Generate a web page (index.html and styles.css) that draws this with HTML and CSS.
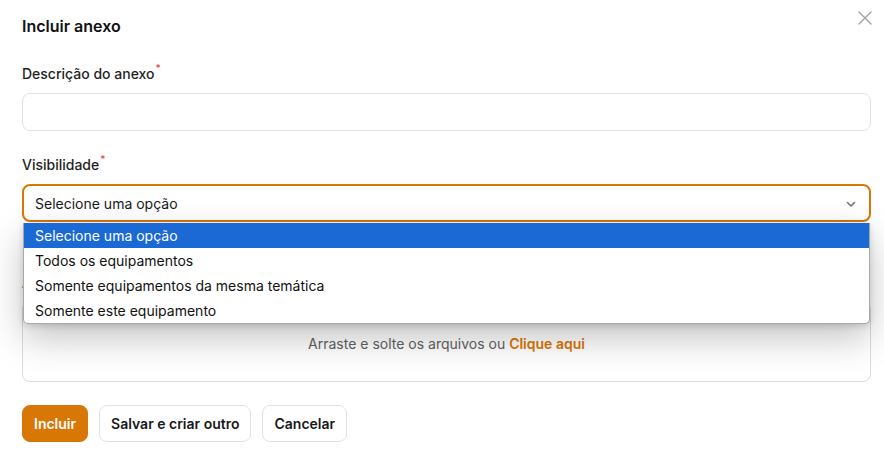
FILE: index.html
```html
<!DOCTYPE html>
<html lang="pt-BR">
<head>
<meta charset="utf-8">
<title>Incluir anexo</title>
<link rel="stylesheet" href="styles.css">
</head>
<body>
<div class="modal">
  <header class="modal-head">
    <h1 class="title">Incluir anexo</h1>
    <button class="close" aria-label="Fechar">
      <svg width="16" height="16" viewBox="0 0 16 16"><path d="M2 2L14 14M14 2L2 14" stroke="#a1a1aa" stroke-width="1.4" stroke-linecap="round" fill="none"/></svg>
    </button>
  </header>

  <div class="field">
    <label class="label">Descrição do anexo<sup class="req">*</sup></label>
    <div class="input"></div>
  </div>

  <div class="field">
    <label class="label">Visibilidade<sup class="req">*</sup></label>
    <div class="select-wrap">
      <div class="select">
        <span>Selecione uma opção</span>
        <svg class="chev" width="12" height="12" viewBox="0 0 12 12"><path d="M2.5 4.5L6 8L9.5 4.5" stroke="#6b7280" stroke-width="1.6" fill="none" stroke-linecap="round" stroke-linejoin="round"/></svg>
      </div>
      <ul class="options">
        <li class="opt active">Selecione uma opção</li>
        <li class="opt">Todos os equipamentos</li>
        <li class="opt">Somente equipamentos da mesma temática</li>
        <li class="opt">Somente este equipamento</li>
      </ul>
    </div>
  </div>

  <div class="field field-file">
    <label class="label">Anexo<sup class="req">*</sup></label>
    <div class="drop">
      <span>Arraste e solte os arquivos ou <a class="link">Clique aqui</a></span>
    </div>
  </div>

  <div class="actions">
    <button class="btn primary">Incluir</button>
    <button class="btn">Salvar e criar outro</button>
    <button class="btn">Cancelar</button>
  </div>
</div>
</body>
</html>
```

FILE: styles.css
```css
* { box-sizing: border-box; }
html, body { margin: 0; padding: 0; background: #fff; }
body {
  font-family: Inter, "Noto Sans", "Liberation Sans", sans-serif;
  color: #18181b;
  font-size: 14px;
}
.modal {
  padding: 14px 11px 0 22px;
  width: 884px;
}
.modal-head {
  display: flex;
  justify-content: space-between;
  align-items: flex-start;
  height: 24px;
}
.title {
  margin: 0;
  font-size: 16px;
  line-height: 24px;
  font-weight: 600;
  color: #111;
}
.close {
  border: 0;
  background: none;
  padding: 0;
  margin: -4px 0 0 0;
  width: 16px;
  height: 16px;
  display: flex;
}
.field { display: flex; flex-direction: column; margin-top: 26px; width: 849px; }
.field + .field { margin-top: 24px; }
.label {
  font-size: 14px;
  line-height: 20px;
  font-weight: 500;
  color: #1f1f23;
  margin-bottom: 9px;
}
.req {
  color: #ef4444;
  font-size: 10px;
  line-height: 0;
  position: relative;
  top: -1px;
  margin-left: 1px;
}
.input {
  height: 38px;
  border: 1px solid #e2e2e4;
  border-radius: 8px;
  background: #fff;
}
.select-wrap { position: relative; }
.select {
  height: 38px;
  border: 2px solid #d97706;
  border-radius: 8px;
  display: flex;
  align-items: center;
  justify-content: space-between;
  padding: 0 12px 0 11px;
  color: #18181b;
  background: #fff;
}
.chev { margin-top: 1px; }
.options {
  position: absolute;
  left: 1px;
  right: 1px;
  top: 39px;
  margin: 0;
  padding: 0;
  list-style: none;
  background: #fff;
  border: 1px solid #a8a8a8;
  border-top: 0;
  border-radius: 0 0 5px 5px;
  box-shadow: 0 14px 36px rgba(0,0,0,0.24), 0 2px 6px rgba(0,0,0,0.14);
  z-index: 5;
  overflow: hidden;
}
.opt {
  height: 25px;
  line-height: 25px;
  padding-left: 11px;
  font-size: 14px;
  color: #111;
}
.opt.active { background: #1a69d5; color: #fff; }
.field.field-file { margin-top: 51px; }
.field-file .label { margin-bottom: 8px; }
.drop {
  height: 81px;
  border: 1px solid #dcdcdc;
  border-radius: 8px;
  display: flex;
  align-items: center;
  justify-content: center;
  padding-top: 4px;
  color: #616161;
  font-size: 14px;
}
.link { color: #d97706; font-weight: 600; }
.actions {
  display: flex;
  gap: 11px;
  margin-top: 23px;
}
.btn {
  height: 37px;
  padding: 0 11px;
  border: 1px solid #e2e2e4;
  border-radius: 8px;
  background: #fff;
  font-family: inherit;
  font-size: 14px;
  font-weight: 600;
  color: #18181b;
}
.btn.primary {
  background: #d97706;
  border-color: #d97706;
  color: #fff;
}
```
